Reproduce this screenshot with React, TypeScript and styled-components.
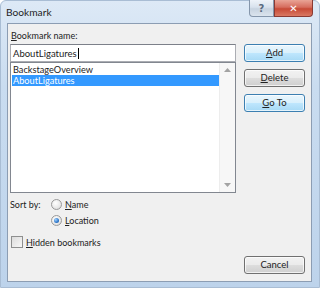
import React from "react";
import styled, { createGlobalStyle } from "styled-components";

const GlobalStyle = createGlobalStyle`
  html, body { margin: 0; padding: 0; background: #ffffff; }
  body { font-family: Lato, "Noto Sans", sans-serif; font-size: 9px; color: #222; }
`;

const Window = styled.div`
  width: 320px;
  height: 288px;
  box-sizing: border-box;
  display: flex;
  flex-direction: column;
  background: linear-gradient(180deg, #dde9f6 0%, #c9dcf0 30%, #bdd3eb 100%);
  border: 1px solid #a9bdd4;
  border-radius: 6px 6px 0 0;
`;

const TitleBar = styled.div`
  height: 22px;
  display: flex;
  align-items: flex-start;
  justify-content: space-between;
`;

const Title = styled.div`
  padding: 5px 0 0 5px;
  font-size: 10.2px;
  line-height: 13px;
  color: #1e1e1e;
`;

const Captions = styled.div`
  display: flex;
  margin-right: 6px;
  margin-top: -1px;
`;

const CaptionButton = styled.div<{ $close?: boolean }>`
  width: ${(p) => (p.$close ? "39px" : "25px")};
  height: 17px;
  box-sizing: border-box;
  display: flex;
  align-items: center;
  justify-content: center;
  border: 1px solid ${(p) => (p.$close ? "#8a3a33" : "#8596ab")};
  border-top: none;
  border-radius: ${(p) => (p.$close ? "0 0 4px 0" : "0 0 0 4px")};
  background: ${(p) =>
    p.$close
      ? "linear-gradient(180deg, #e9a496 0%, #d66d5e 45%, #c74a36 55%, #d97863 100%)"
      : "linear-gradient(180deg, #eef3f9 0%, #d8e2ed 45%, #c7d3e0 55%, #dbe4ee 100%)"};
  color: ${(p) => (p.$close ? "#fff" : "#5a6a80")};
  font-family: "DejaVu Sans", sans-serif;
  font-size: 10px;
  font-weight: bold;
`;

const Client = styled.div`
  flex: 1;
  margin: 0 7px 5px 6px;
  border: 1px solid #8c9db3;
  background: #f0f0f0;
  display: flex;
`;

const LeftColumn = styled.div`
  width: 226px;
  margin-left: 2px;
  display: flex;
  flex-direction: column;
`;

const RightColumn = styled.div`
  width: 61px;
  margin-left: 8px;
  padding: 20px 0 7px;
  display: flex;
  flex-direction: column;
  gap: 7px;
`;

const Label = styled.div`
  margin-top: 5px;
  height: 15px;
  line-height: 14px;
  padding-left: 1px;
`;

const U = styled.span`
  text-decoration: underline;
`;

const NameInput = styled.div`
  height: 18px;
  box-sizing: border-box;
  border: 1px solid #abadb3;
  border-top-color: #7c8089;
  background: #fff;
  padding: 0 0 0 2px;
  display: flex;
  align-items: center;
  font-size: 9.5px;
`;

const Caret = styled.span`
  display: inline-block;
  width: 1px;
  height: 11px;
  background: #000;
  margin-left: 1px;
`;

const ListBox = styled.div`
  height: 131px;
  box-sizing: border-box;
  border: 1px solid #828790;
  background: #fff;
  display: flex;
`;

const Items = styled.div`
  flex: 1;
  padding: 1px 0 0 1px;
`;

const Item = styled.div<{ $selected?: boolean }>`
  height: 11px;
  line-height: 11px;
  font-size: 9.2px;
  padding-left: 1px;
  background: ${(p) => (p.$selected ? "#3399ff" : "transparent")};
  color: ${(p) => (p.$selected ? "#fff" : "#222")};
  white-space: nowrap;
  overflow: hidden;
`;

const ScrollBar = styled.div`
  width: 15px;
  background: #f7f7f7;
  border-left: 1px solid #ededed;
  display: flex;
  flex-direction: column;
  justify-content: space-between;
  align-items: center;
  padding: 5px 0 5px;
`;

const SortRow = styled.div<{ $indent?: boolean }>`
  height: 16px;
  display: flex;
  align-items: center;
  margin-top: ${(p) => (p.$indent ? "0" : "3px")};
  padding-left: ${(p) => (p.$indent ? "41px" : "0")};
`;

const SortLabel = styled.span`
  width: 41px;
`;

const Radio = styled.span<{ $checked?: boolean }>`
  width: 11px;
  height: 11px;
  box-sizing: border-box;
  border-radius: 50%;
  border: 1px solid #9a9a9a;
  background: radial-gradient(circle at 40% 35%, #ffffff 0%, #e8e8e8 60%, #d2d2d2 100%);
  margin-right: 3px;
  display: flex;
  align-items: center;
  justify-content: center;
  &::after {
    content: "";
    display: ${(p) => (p.$checked ? "block" : "none")};
    width: 5px;
    height: 5px;
    border-radius: 50%;
    background: radial-gradient(circle at 35% 35%, #9fd1ff 0%, #2f77c8 60%, #1a4f98 100%);
  }
`;

const CheckRow = styled.div`
  height: 14px;
  margin-top: 7px;
  display: flex;
  align-items: center;
  margin-left: 1px;
`;

const CheckBox = styled.span`
  width: 12px;
  height: 12px;
  box-sizing: border-box;
  border: 1px solid #8e8f8f;
  background: linear-gradient(135deg, #dcdcdc 0%, #f7f7f7 100%);
  margin-right: 3px;
`;

const Button = styled.div<{ $focus?: boolean }>`
  height: 18px;
  box-sizing: border-box;
  border: 1px solid ${(p) => (p.$focus ? "#3c7fb1" : "#707070")};
  border-radius: 3px;
  background: ${(p) =>
    p.$focus
      ? "linear-gradient(180deg, #eaf6fd 0%, #d9f0fc 48%, #bee6fd 52%, #a7d9f5 100%)"
      : "linear-gradient(180deg, #f2f2f2 0%, #ebebeb 48%, #dddddd 52%, #cfcfcf 100%)"};
  box-shadow: inset 0 0 0 1px rgba(255, 255, 255, 0.7);
  display: flex;
  align-items: center;
  justify-content: center;
  line-height: 14px;
  font-size: 9.5px;
`;

const Spacer = styled.div`
  flex: 1;
`;

const Arrow = ({ down }: { down?: boolean }) => (
  <svg width="7" height="4" viewBox="0 0 7 4">
    <path d={down ? "M0 0h7L3.5 4z" : "M0 4h7L3.5 0z"} fill="#a3a3a3" />
  </svg>
);

export default function App() {
  return (
    <>
      <GlobalStyle />
      <Window>
        <TitleBar>
          <Title>Bookmark</Title>
          <Captions>
            <CaptionButton>?</CaptionButton>
            <CaptionButton $close>✕</CaptionButton>
          </Captions>
        </TitleBar>
        <Client>
          <LeftColumn>
            <Label>
              <U>B</U>ookmark name:
            </Label>
            <NameInput>
              AboutLigatures
              <Caret />
            </NameInput>
            <ListBox>
              <Items>
                <Item>BackstageOverview</Item>
                <Item $selected>AboutLigatures</Item>
              </Items>
              <ScrollBar>
                <Arrow />
                <Arrow down />
              </ScrollBar>
            </ListBox>
            <SortRow>
              <SortLabel>Sort by:</SortLabel>
              <Radio />
              <span>
                <U>N</U>ame
              </span>
            </SortRow>
            <SortRow $indent>
              <Radio $checked />
              <span>
                <U>L</U>ocation
              </span>
            </SortRow>
            <CheckRow>
              <CheckBox />
              <span>
                <U>H</U>idden bookmarks
              </span>
            </CheckRow>
          </LeftColumn>
          <RightColumn>
            <Button $focus>
              <U>A</U>dd
            </Button>
            <Button>
              <U>D</U>elete
            </Button>
            <Button $focus>
              <U>G</U>o To
            </Button>
            <Spacer />
            <Button>Cancel</Button>
          </RightColumn>
        </Client>
      </Window>
    </>
  );
}
